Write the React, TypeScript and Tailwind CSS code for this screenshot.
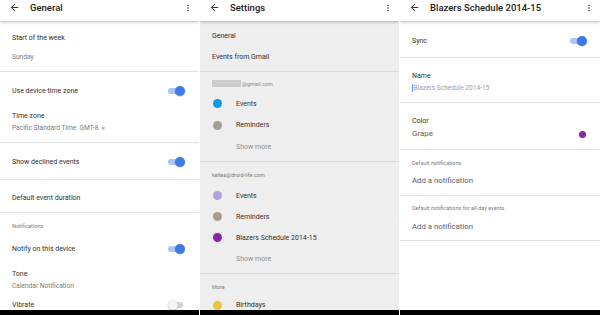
import React from "react";

const Back = () => (
  <svg viewBox="0 0 24 24" className="w-[11px] h-[11px] fill-[#3a3a3a] shrink-0 -mt-[0.5px]">
    <path d="M20 11H7.83l5.59-5.59L12 4l-8 8 8 8 1.41-1.41L7.83 13H20v-2z" />
  </svg>
);

const Kebab = () => (
  <svg viewBox="0 0 24 24" className="w-[10px] h-[10px] fill-[#3a3a3a] shrink-0">
    <path d="M12 8c1.1 0 2-.9 2-2s-.9-2-2-2-2 .9-2 2 .9 2 2 2zm0 2c-1.1 0-2 .9-2 2s.9 2 2 2 2-.9 2-2-.9-2-2-2zm0 6c-1.1 0-2 .9-2 2s.9 2 2 2 2-.9 2-2-.9-2-2-2z" />
  </svg>
);

const Header = ({ title }: { title: string }) => (
  <div className="relative z-10 h-[21px] shrink-0 bg-white flex items-start pt-[2.5px] pl-[8.5px] pr-[6px] shadow-[0_1px_3px_rgba(0,0,0,0.28)]">
    <Back />
    <span className="ml-[10.5px] text-[9.5px] leading-[10px] font-medium text-[#222] whitespace-nowrap">
      {title}
    </span>
    <div className="ml-auto">
      <Kebab />
    </div>
  </div>
);

const Toggle = ({ on = true }: { on?: boolean }) => (
  <div className="relative w-[17px] h-[10px] flex items-center shrink-0">
    <div className={on ? "w-[15px] h-[6px] rounded-full bg-[#a9c6f7]" : "w-[15px] h-[6px] rounded-full bg-[#d2d2d2]"} />
    {on ? (
      <div className="absolute right-0 top-0 w-[10px] h-[10px] rounded-full bg-[#3f7be6] shadow-[0_0.5px_1px_rgba(0,0,0,0.3)]" />
    ) : (
      <div className="absolute left-0 top-0 w-[10px] h-[10px] rounded-full bg-[#f3f3f3] shadow-[0_0.5px_1.5px_rgba(0,0,0,0.35)]" />
    )}
  </div>
);

const label = "text-[7px] leading-[10px] text-[#2f2f2f] whitespace-nowrap";
const value = "text-[6.6px] leading-[10px] text-[#7b7b7b] whitespace-nowrap";
const small = "text-[5.5px] leading-[10px] text-[#7a7a7a] whitespace-nowrap";

const General = () => (
  <div className="w-[199px] h-[310px] bg-white flex flex-col overflow-hidden">
    <Header title="General" />
    <div className="h-[51px] shrink-0 border-b border-[#e2e2e2] pl-3 pt-[12px]">
      <div className={label}>Start of the week</div>
      <div className={`${value} mt-[9px]`}>Sunday</div>
    </div>
    <div className="h-[38px] shrink-0 flex items-center justify-between pl-3 pr-[14px]">
      <span className={label}>Use device time zone</span>
      <Toggle />
    </div>
    <div className="h-[33px] shrink-0 border-b border-[#e2e2e2] pl-3 pt-[1px]">
      <div className={label}>Time zone</div>
      <div className={`${value} mt-[2px] flex items-center`}>
        Pacific Standard Time&nbsp;&nbsp;GMT-8
        <span className="ml-[3px] text-[5px] text-[#b5b5b5]">✱</span>
      </div>
    </div>
    <div className="h-[37px] shrink-0 border-b border-[#e2e2e2] flex items-center justify-between pl-3 pr-[14px] pt-[1px]">
      <span className={label}>Show declined events</span>
      <Toggle />
    </div>
    <div className="h-[33px] shrink-0 border-b border-[#e2e2e2] flex items-center pl-3 pt-[4px]">
      <span className={label}>Default event duration</span>
    </div>
    <div className="pl-3 pt-[8px]">
      <div className={small}>Notifications</div>
    </div>
    <div className="h-[36px] shrink-0 flex items-center justify-between pl-3 pr-[14px]">
      <span className={label}>Notify on this device</span>
      <Toggle />
    </div>
    <div className="pl-3 pt-[2px]">
      <div className={label}>Tone</div>
      <div className={`${value} mt-[2px]`}>Calendar Notification</div>
    </div>
    <div className="h-[27px] shrink-0 flex items-center justify-between pl-3 pr-[14px]">
      <span className={label}>Vibrate</span>
      <Toggle on={false} />
    </div>
  </div>
);

const Cal = ({ color, name, h = 21 }: { color: string; name: string; h?: number }) => (
  <div className="flex items-center pl-[13px]" style={{ height: h }}>
    <div className="w-[9px] h-[9px] rounded-full shrink-0" style={{ background: color }} />
    <span className={`${label} ml-[14px]`}>{name}</span>
  </div>
);

const showMore = "text-[7px] leading-[10px] text-[#939393] whitespace-nowrap";

const Settings = () => (
  <div className="w-[199px] h-[310px] bg-[#eeeeee] flex flex-col overflow-hidden">
    <Header title="Settings" />
    <div className="border-b border-[#dadada] pt-[4px] pb-[4px] shrink-0">
      <div className="h-[21px] flex items-center pl-3">
        <span className={label}>General</span>
      </div>
      <div className="h-[21px] flex items-center pl-3">
        <span className={label}>Events from Gmail</span>
      </div>
    </div>
    <div className="border-b border-[#dadada] pt-[2px] pb-[3px] shrink-0">
      <div className="h-[19px] flex items-center pl-3">
        <div className="w-[29px] h-[7px] bg-[#cbcbcb]" />
        <span className={`${small} ml-[1px] text-[#8a8a8a]`}>@gmail.com</span>
      </div>
      <Cal color="#0a9be3" name="Events" h={21} />
      <Cal color="#a89c8f" name="Reminders" h={22} />
      <div className="h-[22px] flex items-center pl-[36px]">
        <span className={showMore}>Show more</span>
      </div>
    </div>
    <div className="border-b border-[#dadada] pt-[3px] pb-[4px] shrink-0">
      <div className="h-[20px] flex items-center pl-3">
        <span className={small}>kelles@droid-life.com</span>
      </div>
      <Cal color="#b4a0dc" name="Events" />
      <Cal color="#a89c8f" name="Reminders" />
      <Cal color="#8b24ac" name="Blazers Schedule 2014-15" />
      <div className="h-[21px] flex items-center pl-[36px]">
        <span className={showMore}>Show more</span>
      </div>
    </div>
    <div className="pt-[3px] shrink-0">
      <div className="h-[20px] flex items-center pl-3">
        <span className={small}>More</span>
      </div>
      <Cal color="#e7c63c" name="Birthdays" h={16} />
    </div>
  </div>
);

const Calendar = () => (
  <div className="w-[200px] h-[310px] bg-white flex flex-col overflow-hidden">
    <Header title="Blazers Schedule 2014-15" />
    <div className="h-[37px] shrink-0 border-b border-[#e2e2e2] flex items-center justify-between pl-3 pr-[13px] pt-[4px]">
      <span className={label}>Sync</span>
      <Toggle />
    </div>
    <div className="h-[45px] shrink-0 border-b border-[#e2e2e2] pl-3 pt-[13px]">
      <div className={label}>Name</div>
      <div className="mt-[2px] flex items-center">
        <span className="w-px h-[8px] bg-[#5a8ef0] shrink-0" />
        <span className="text-[6.6px] leading-[10px] text-[#9c9c9c] whitespace-nowrap ml-[0.5px]">
          Blazers Schedule 2014-15
        </span>
      </div>
    </div>
    <div className="h-[47px] shrink-0 border-b border-[#e2e2e2] pl-3 pr-[14px] pt-[13px]">
      <div className={label}>Color</div>
      <div className="mt-[3px] flex items-center justify-between">
        <span className="text-[8px] leading-[10px] text-[#5e5e5e]">Grape</span>
        <div className="w-[7px] h-[7px] rounded-full bg-[#8b24ac]" />
      </div>
    </div>
    <div className="h-[46px] shrink-0 border-b border-[#e2e2e2] pl-3 pt-[8px]">
      <div className={small}>Default notifications</div>
      <div className="mt-[7px] text-[7.8px] leading-[12px] text-[#5e5e5e] whitespace-nowrap">Add a notification</div>
    </div>
    <div className="h-[45px] shrink-0 border-b border-[#e2e2e2] pl-3 pt-[7px]">
      <div className={small}>Default notifications for all-day events</div>
      <div className="mt-[8px] text-[7.8px] leading-[12px] text-[#5e5e5e] whitespace-nowrap">Add a notification</div>
    </div>
  </div>
);

export default function App() {
  return (
    <div className="w-[600px] h-[315px] bg-white flex gap-px overflow-hidden font-['Roboto',sans-serif]">
      <div className="flex flex-col">
        <General />
        <div className="h-[5px] bg-black" />
      </div>
      <div className="flex flex-col">
        <Settings />
        <div className="h-[5px] bg-black" />
      </div>
      <div className="flex flex-col">
        <Calendar />
        <div className="h-[5px] bg-black" />
      </div>
    </div>
  );
}
